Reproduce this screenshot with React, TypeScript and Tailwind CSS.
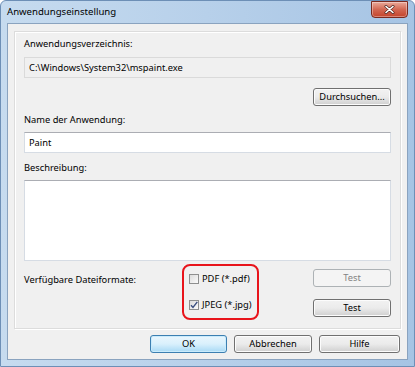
import React from "react";

const btn =
  "h-[18px] rounded-[3px] border border-[#707070] bg-gradient-to-b from-[#f2f2f2] via-[#ebebeb] to-[#cfcfcf] text-[9.3px] leading-none text-black flex items-center justify-center shadow-[inset_0_0_0_1px_#fcfcfc] whitespace-nowrap";

function Check({ checked }: { checked?: boolean }) {
  return (
    <span className="relative inline-flex h-[10px] w-[10px] shrink-0 border border-[#8e8f8f] bg-gradient-to-br from-[#dcdcdc] to-[#fbfbfb]">
      {checked && (
        <svg viewBox="0 0 10 10" className="absolute -left-px -top-px h-[10px] w-[10px]">
          <path d="M2 5.2 L4 7.5 L8.3 1.8" fill="none" stroke="#3b4f80" strokeWidth="1.4" />
        </svg>
      )}
    </span>
  );
}

export default function App() {
  return (
    <div
      className="relative flex h-[367px] w-[415px] flex-col overflow-hidden rounded-t-[6px] border border-[#6d8fb6] bg-gradient-to-r from-[#c6dbef] via-[#b7d0ea] to-[#a6c4e4] text-black"
      style={{ fontFamily: '"Noto Sans", "Liberation Sans", sans-serif' }}
    >
      {/* title bar */}
      <div className="flex h-[22px] shrink-0 items-center justify-between pl-[6px]">
        <span className="text-[9.6px] leading-none">Anwendungseinstellung</span>
        <div className="mr-[6px] -mt-[5px] flex h-[17px] w-[37px] items-center justify-center rounded-b-[4px] border border-[#7b2a1f] bg-gradient-to-b from-[#e9a99a] via-[#d26752] to-[#c4432b] shadow-[inset_0_0_0_1px_rgba(255,255,255,0.35)]">
          <svg viewBox="0 0 12 10" className="h-[9px] w-[11px]">
            <path d="M2 1.5 L10 8.5 M10 1.5 L2 8.5" stroke="#3a1410" strokeWidth="3" strokeLinecap="round" />
            <path d="M2 1.5 L10 8.5 M10 1.5 L2 8.5" stroke="#ffffff" strokeWidth="1.6" strokeLinecap="round" />
          </svg>
        </div>
      </div>

      {/* client area */}
      <div className="mx-[6px] flex flex-1 flex-col border border-[#8aa3bf] bg-[#f0f0f0] px-[6px] pb-[5px] pt-[7px] text-[9.3px]">
        <div className="flex h-[298px] flex-col border border-[#dcdcdc] px-[9px] pt-[5px] shadow-[inset_1px_1px_0_#ffffff,1px_1px_0_#ffffff]">
          <div className="leading-[14px]">Anwendungsverzeichnis:</div>
          <div className="mt-[6px] flex h-[21px] items-center border border-[#dadada] bg-[#f0f0f0] px-[4px]">
            C:\Windows\System32\mspaint.exe
          </div>
          <div className="mt-[10px] flex justify-end">
            <button className={btn + " w-[78px]"}>Durchsuchen...</button>
          </div>
          <div className="mt-[7px] leading-[14px]">Name der Anwendung:</div>
          <div className="mt-[5px] flex h-[21px] items-center border border-[#d6dce4] border-t-[#abadb3] bg-white px-[4px]">
            Paint
          </div>
          <div className="mt-[8px] leading-[14px]">Beschreibung:</div>
          <div className="mt-[5px] h-[81px] border border-[#d6dce4] border-t-[#abadb3] bg-white" />
          <div className="mt-[3px] flex">
            <div className="mt-[9px] w-[158px] leading-[14px]">Verfügbare Dateiformate:</div>
            <div className="flex h-[56px] w-[77px] flex-col justify-between rounded-[8px] border-2 border-[#e8141b] px-[5px] py-[6px]">
              <label className="flex items-center gap-[3px] whitespace-nowrap leading-[14px]">
                <Check /> PDF (*.pdf)
              </label>
              <label className="flex items-center gap-[3px] whitespace-nowrap leading-[14px]">
                <Check checked /> JPEG (*.jpg)
              </label>
            </div>
            <div className="ml-auto flex flex-col gap-[12px] pt-[5px]">
              <button className="flex h-[18px] w-[78px] items-center justify-center rounded-[3px] border border-[#adb2b5] bg-[#f4f4f4] text-[9.3px] leading-none text-[#838383]">
                Test
              </button>
              <button className={btn + " w-[78px]"}>Test</button>
            </div>
          </div>
        </div>
        <div className="mt-[6px] flex justify-end gap-[7px] pr-[1px]">
          <button className="flex h-[18px] w-[77px] items-center justify-center rounded-[3px] border border-[#3c7fb1] bg-gradient-to-b from-[#eaf6fd] via-[#d9f0fc] to-[#a7d9f5] text-[9.3px] leading-none shadow-[inset_0_0_0_1px_#c9ebfc]">
            OK
          </button>
          <button className={btn + " w-[78px]"}>Abbrechen</button>
          <button className={btn + " w-[81px]"}>Hilfe</button>
        </div>
      </div>
      <div className="h-[6px] shrink-0" />
    </div>
  );
}
